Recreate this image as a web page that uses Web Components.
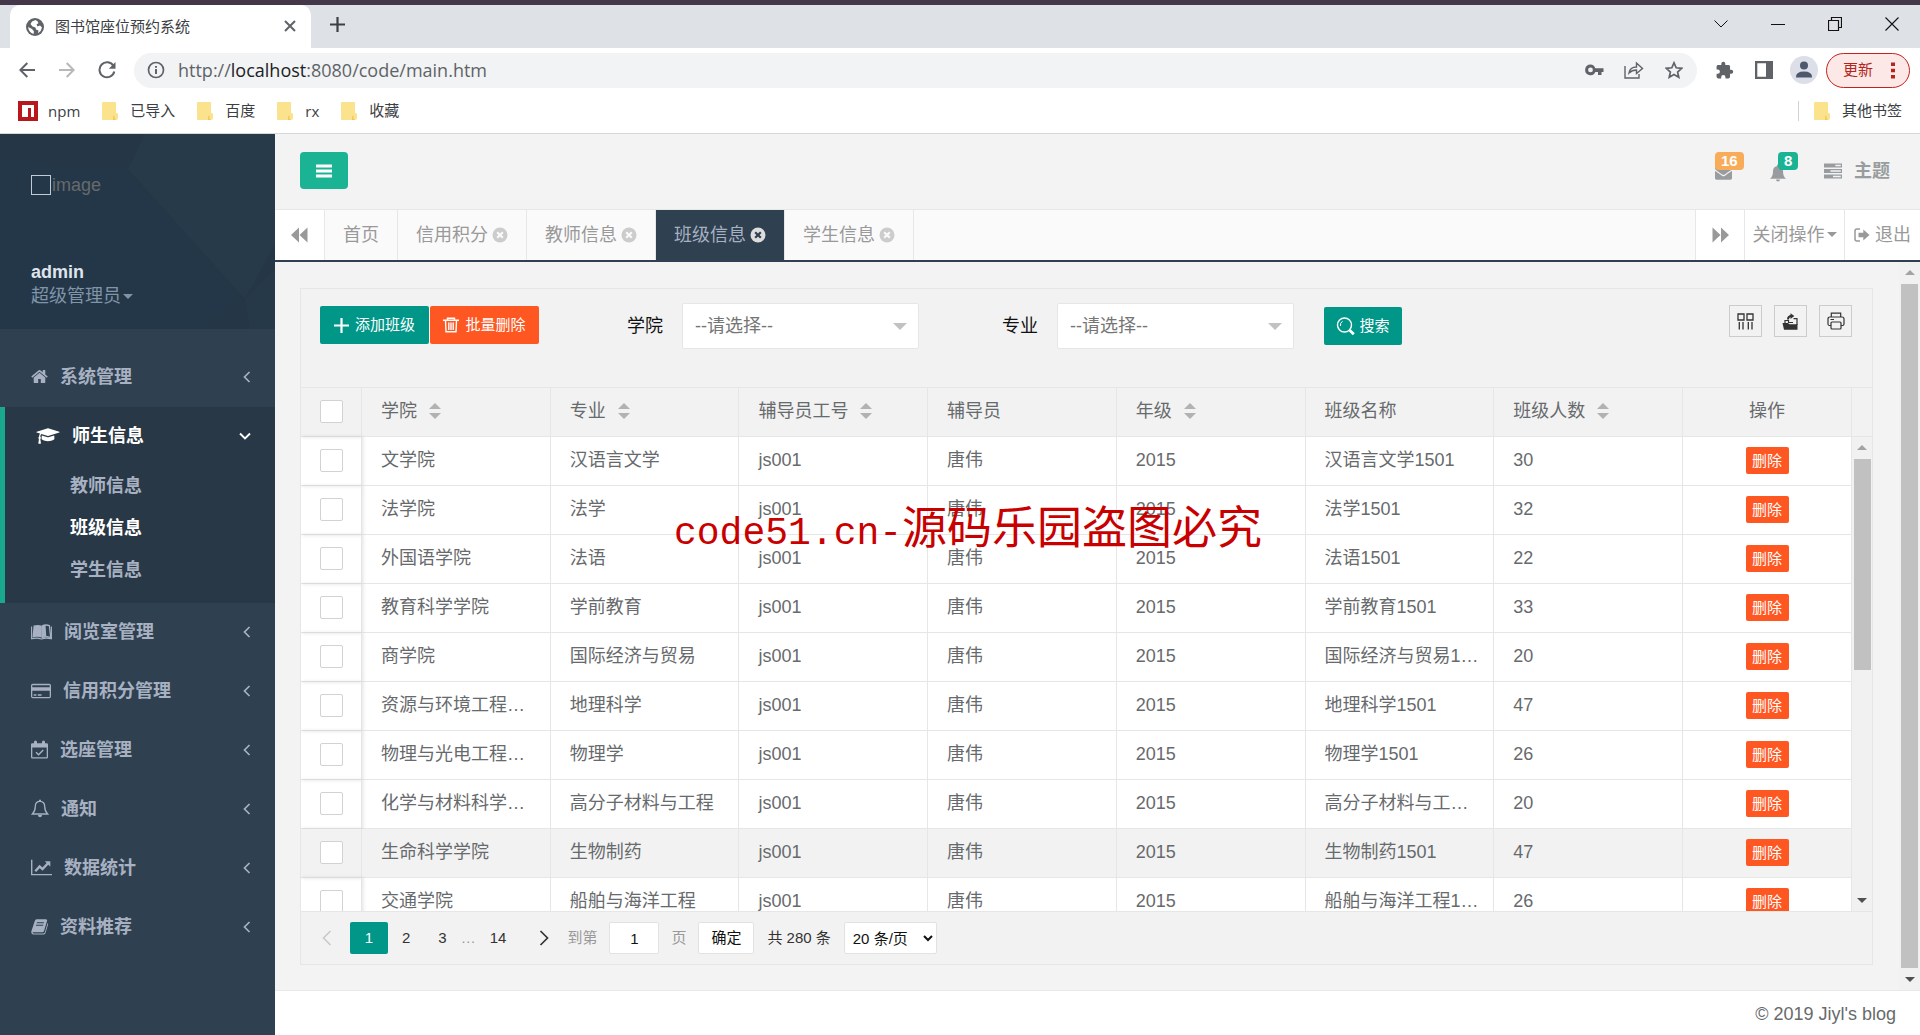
<!DOCTYPE html>
<html lang="zh-CN">
<head>
<meta charset="utf-8">
<title>图书馆座位预约系统</title>
<style>
  html, body { margin: 0; height: 100%; }
  body {
    font-family: "Liberation Sans", "Noto Sans CJK SC", sans-serif;
    font-size: 18px; line-height: 24px; color: #676a6c; background: #fff; overflow: hidden;
  }
</style>
</head>
<body>
<app-window></app-window>
<script>
const BASE = `
  *, *::before, *::after { box-sizing: border-box; }
  button, input, select { font: inherit; margin: 0; }
  button { border: 0; background: none; padding: 0; color: inherit; cursor: pointer; }
  a { color: inherit; text-decoration: none; }
  ul { list-style: none; margin: 0; padding: 0; }
`;
function define(name, css, html, setup) {
  customElements.define(name, class extends HTMLElement {
    constructor() {
      super();
      this.attachShadow({ mode: 'open' });
    }
    connectedCallback() {
      const t = document.createElement('template');
      t.innerHTML = `<style>${BASE}${css}</style>` + (typeof html === 'function' ? html(this) : html);
      this.shadowRoot.replaceChildren(t.content.cloneNode(true));
      if (setup) setup(this);
    }
  });
}

/* name: [width, height, viewBox, body] */
const line = (d, w = 2) => `<path d="${d}" fill="none" stroke="currentColor" stroke-width="${w}"/>`;
const ICONS = {
  home: [17, 17, '50 50 1692 1692', '<path d="M1472 992v480q0 26-19 45t-45 19h-384v-384h-256v384h-384q-26 0-45-19t-19-45v-480q0-1 .5-3t.5-3l575-474 575 474q1 2 1 6zm223-69l-62 74q-8 9-21 11h-3q-13 0-21-7l-692-577-692 577q-12 8-24 7-13-2-21-11l-62-74q-8-10-7-23.5t11-21.5l719-599q32-26 76-26t76 26l244 204v-195q0-14 9-23t23-9h192q14 0 23 9t9 23v408l219 182q10 8 11 21.5t-7 23.5z"/>'],
  cap: [24, 18, '0 0 2304 1792', '<path d="M1774 836l18 316q4 69-82 128t-235 93.5-323 34.5-323-34.5-235-93.5-82-128l18-316 574 181q22 7 48 7t48-7zm530-324q0 23-22 31l-1120 352q-4 1-10 1t-10-1l-652-206q-43 34-71 111.5t-34 178.5q63 36 63 109 0 69-58 107l58 433q2 14-8 25-9 11-24 11h-192q-15 0-24-11-10-11-8-25l58-433q-58-38-58-107 0-73 65-111 11-207 98-330l-333-104q-22-8-22-31t22-31l1120-352q4-1 10-1t10 1l1120 352q22 8 22 31z"/>'],
  reader: [21, 16, '0 0 21 16', '<path d="M2.600 1.600Q7 .2 10.800 1.700V13.600Q6.500 12 1.400 13.500Z"/><path d="M10.900 2Q14.500.2 18.400 1.600L19.700 13.500Q15 12 10.900 13.600" fill="none" stroke="currentColor" stroke-width="1.300"/><path d="M10.700 2Q13 1 14.500 1.100L15.300 12.500Q13 12.500 10.700 13.500Z"/><path d="M.6 2.500V14.800Q6 13.300 10.500 15Q15 13.300 20.400 14.800V2.500" fill="none" stroke="currentColor" stroke-width="1.100"/>'],
  card: [20, 16, '0 0 20 16', '<path fill-rule="evenodd" d="M1.700.8H18.300Q20 .8 20 2.500V13.500Q20 15.200 18.300 15.200H1.700Q0 15.200 0 13.500V2.500Q0 .8 1.700.8ZM1.300 2.200V4.300H18.700V2.200ZM1.300 7.700V13.900H18.700V7.700ZM2.700 11.300H5.400V12.700H2.700ZM6.800 11.300H10.500V12.700H6.800Z"/>'],
  calendar: [17, 19, '0 0 17 19', '<path fill-rule="evenodd" d="M1.300 3.200H3V2Q3 .5 4.500 .5T6 2V3.200H11V2Q11 .5 12.500.5T14 2V3.200H15.700Q17 3.200 17 4.500V17.200Q17 18.500 15.700 18.500H1.300Q0 18.500 0 17.200V4.500Q0 3.200 1.300 3.200ZM1.300 7.400V17.200H15.700V7.400Z"/>' + line('M5 12.200L7.600 14.700L12.200 10', 1.500)],
  bellO: [18, 19, '0 0 18 19', line('M9 2.300C6 2.300 4.300 4.500 4.300 7.600C4.300 11.500 3 13.500 1.400 15H16.600C15 13.500 13.700 11.500 13.700 7.600C13.700 4.500 12 2.300 9 2.300Z', 1.300) + '<path d="M6.900 16H11.100Q10.800 18.300 9 18.300T6.900 16ZM8 .8H10V2.500H8Z"/>'],
  chart: [21, 17, '0 0 21 17', line('M.7.700V15.600H21', 1.400) + line('M4.300 12.300L8.600 7.400L11.500 10.100L17 4.200', 2.400) + '<path d="M13.800 2.200H19.300V7.700Z"/>'],
  book: [17, 17, '0 0 17 17', '<path fill-rule="evenodd" d="M5.500 1.200H15Q16.500 1.500 16 3L13 13Q12.700 14.200 11.200 14.200H1.800Q1.300 15.300 2.800 15.500H12.500Q13.500 15.300 13.900 14.300L16.600 5Q17.300 5.700 16.900 7L14.500 15Q14 16.600 12.500 16.600H2.500Q.2 16.300.2 13.700L3.800 3Q4.200 1.500 5.500 1.200ZM6 4.200L5.700 5.200H12.800L13.100 4.200ZM5.100 6.800L4.800 7.800H12L12.300 6.800Z"/>'],
  left: [8, 12, '0 0 8 12', line('M6.500 1L1.500 6L6.500 11', 1.700)],
  down: [12, 8, '0 0 12 8', line('M1 1.500L6 6.500L11 1.500', 1.900)],
  bars: [16, 14, '0 0 16 14', '<path d="M0 .5H16V3.500H0ZM0 5.500H16V8.500H0ZM0 10.500H16V13.500H0Z"/>'],
  envelope: [19, 17, '0 0 1792 1792', '<path d="M1792 710v794q0 66-47 113t-113 47h-1472q-66 0-113-47t-47-113v-794q44 49 101 87 362 246 497 345 57 42 92.500 65.500t94.500 48 110 24.500h2q51 0 110-24.500t94.500-48 92.500-65.500q170-123 498-345 57-39 100-87zm0-294q0 79-49 151t-122 123q-376 261-468 325-10 7-42.500 31t-54 38.500-52 32.500-57.500 27-50 9h-2q-23 0-50-9t-57.500-27-52-32.500-54-38.500-42.500-31q-91-64-262-182.500t-205-142.500q-62-42-117-115.500t-55-136.500q0-78 41.500-130t118.500-52h1472q65 0 112.500 47t47.500 113z"/>'],
  bell: [18, 18, '0 0 18 18', '<path d="M8 .8Q9 0 10 .8V2Q14 3 14 7C14 11 15 13 17 14.800H1C3 13 4 11 4 7Q4 3 8 2ZM7 15.500H11Q11 17.500 9 17.500T7 15.500Z"/>'],
  tasks: [18, 16, '0 0 18 16', '<path fill-rule="evenodd" d="M0 .5H18V4.500H0ZM11.300 1.700V3.200H16.800V1.700ZM0 6H18V10H0ZM6.500 7.200V8.700H16.800V7.200ZM0 11.500H18V15.500H0ZM9 12.700V14.200H16.800V12.700Z"/>'],
  backward: [17, 16, '0 0 17 16', '<path d="M0 8L8 .5V15.500ZM8.500 8L16.500.5V15.500Z"/>'],
  forward: [17, 16, '0 0 17 16', '<path d="M17 8L9 .5V15.500ZM8.500 8L.5.5V15.500Z"/>'],
  caret: [10, 5, '0 0 10 5', '<path d="M0 0H10L5 5Z"/>'],
  exit: [16, 14, '0 0 16 14', line('M6 1H3Q1 1 1 3V11Q1 13 3 13H6', 1.500) + '<path d="M4.500 4.700H9.300V1.500L15.500 7L9.300 12.500V9.300H4.500Z"/>'],
  remove: [16, 16, '0 0 16 16', '<circle cx="8" cy="8" r="7.500"/><path d="M5.200 5.200L10.800 10.800M10.800 5.200L5.200 10.800" stroke="var(--hole,#fafafa)" stroke-width="2.200"/>'],
  plus: [15, 15, '0 0 15 15', line('M7.500 0V15M0 7.500H15', 2.200)],
  trash: [16, 16, '0 0 16 16', line('M0 3.200H16M4.500 3V1.300H11.500V3M2.500 3.500L3 14.800H13L13.500 3.500M5.800 5.500V13M8 5.500V13M10.200 5.500V13', 1.400)],
  search: [19, 19, '0 0 19 19', '<circle cx="8.500" cy="8" r="7" fill="none" stroke="currentColor" stroke-width="1.400"/>' + line('M4.500 9A4.500 4.500 0 0 1 6.500 4.300', 1) + line('M13.700 13.200L17.800 17.200', 2.800)],
  columns: [17, 17, '0 0 17 17', line('M1 1H7V7H1ZM10 1H16V7H10ZM2.300 9V16.500M6 9V16.500M11.300 9V16.500M15 9V16.500', 1.300)],
  export: [17, 17, '0 0 17 17', '<path d="M.5 10H6L7.500 11.200H15.500V16.800H2Z"/>' + line('M3 10V7.500H6.500V9.500H11M11.500 5.700H15V12', 1.200) + line('M6 6.500Q6 3 9.500 3', 2) + '<path d="M8.500.3L12.300 3L8.500 6Z"/>'],
  print: [18, 18, '0 0 18 18', line('M4.300 5V1.200H13.700V5M4 13.500H2.500Q1 13.500 1 12V7Q1 5 3 5H15Q17 5 17 7V12Q17 13.500 15.500 13.500H14M3.500 7.500H7', 1.200) + '<rect x="4" y="10" width="10" height="7" rx="1" fill="none" stroke="currentColor" stroke-width="1.200"/>'],
  prev: [10, 16, '0 0 10 16', line('M8.500 1L1.500 8L8.500 15', 1.500)],
  next: [10, 16, '0 0 10 16', line('M1.500 1L8.500 8L1.500 15', 1.700)],
  /* browser frame */
  globe: [18, 18, '0 0 18 18', '<circle cx="9" cy="9" r="9"/><path fill="#fff" d="M9.500 2Q12 3 12.500 5L10.500 6.500L11.500 8.500L14 7.500L16 9.500Q15.500 13 12 15.300L12.500 12.500L10 11.500L9.500 9.500L6.500 8.500L4.500 6L6 3.500ZM2 9L6 11L8 13.500L7.500 16Q3 14.500 2 9Z"/>'],
  close: [12, 12, '0 0 12 12', line('M1 1L11 11M11 1L1 11', 2)],
  add: [15, 15, '0 0 15 15', line('M7.500 0V15M0 7.500H15', 2.200)],
  wdown: [14, 8, '0 0 14 8', line('M.5.5L7 7L13.500.5', 1)],
  wmin: [14, 14, '0 0 14 14', line('M0 7.500H14', 1)],
  wmax: [14, 14, '0 0 14 14', line('M.5 3.500H10.500V13.500H.5ZM3.500 3.500V.5H13.500V10.500H10.500', 1.200)],
  wclose: [14, 14, '0 0 14 14', line('M.5.5L13.500 13.500M13.500.5L.5 13.500', 1.100)],
  back: [16, 16, '0 0 16 16', line('M16 8H1.500M8.300 1L1.300 8L8.300 15', 2)],
  fwd: [16, 16, '0 0 16 16', line('M0 8H14.500M7.700 1L14.700 8L7.700 15', 2)],
  reload: [18, 18, '0 0 18 18', line('M15.500 5A7.500 7.500 0 1 0 16.300 10.500', 2) + '<path d="M17.500 1V7.800H10.800Z"/>'],
  info: [18, 18, '0 0 18 18', '<circle cx="9" cy="9" r="7.500" fill="none" stroke="currentColor" stroke-width="1.700"/><path d="M8 8H10V13H8ZM8 5H10V6.800H8Z"/>'],
  key: [19, 12, '0 0 19 12', '<path fill-rule="evenodd" d="M5.500.5A5.300 5.300 0 1 0 10.300 8H13V11H16.500V8H18.500V4.200H10.300A5.300 5.300 0 0 0 5.500.5ZM5.500 3.500A2.400 2.400 0 1 1 5.500 8.300A2.400 2.400 0 0 1 5.500 3.500Z"/>'],
  share: [20, 18, '0 0 20 18', line('M1 5V17H15V13M5 12Q6 6 12.500 6V2L18.500 7.500L12.500 12.500V9Q8 9 5 12Z', 1.400)],
  star: [18, 18, '0 0 18 18', line('M9 1.800L11.200 6.800L16.700 7.300L12.600 11L13.800 16.300L9 13.500L4.200 16.300L5.400 11L1.300 7.300L6.800 6.800Z', 1.700)],
  puzzle: [19, 19, '0 0 24 24', '<path d="M20.500 11H19V7c0-1.100-.9-2-2-2h-4V3.500a2.500 2.500 0 0 0-5 0V5H4c-1.100 0-2 .9-2 2v3.800h1.500a2.700 2.700 0 0 1 0 5.400H2V20c0 1.100.9 2 2 2h3.800v-1.500a2.700 2.700 0 0 1 5.400 0V22H17c1.100 0 2-.9 2-2v-4h1.500a2.500 2.500 0 0 0 0-5z"/>'],
  side: [18, 18, '0 0 18 18', '<path fill-rule="evenodd" d="M0 0H18V18H0ZM2.300 2.300V15.700H11V2.300Z"/>'],
  person: [28, 28, '0 0 28 28', '<circle cx="14" cy="14" r="14" fill="#dcdfe8"/><circle cx="14" cy="9.500" r="4" fill="#4d586d"/><path fill="#4d586d" d="M6 21Q6 15.500 14 15.500T22 21V21.500H6Z"/>'],
  dots: [4, 17, '0 0 4 17', '<path d="M0 .5H4V4H0ZM0 6.700H4V10.200H0ZM0 13H4V16.500H0Z"/>'],
  npm: [20, 20, '0 0 20 20', '<path fill="#b8171b" fill-rule="evenodd" d="M0 0H20V20H0ZM4 4V16H10V7H13V16H16V4Z"/>'],
  folder: [16, 18, '0 0 16 18', '<path fill="#fbe28c" d="M1 0H13Q14 0 14 1V11H15Q16 11 16 12.500V16Q16 18 14 18H1Q0 18 0 17V1Q0 0 1 0Z"/><path fill="#eec95e" d="M11 18V15Q11 13.500 12.500 13.500V16.500L14 18Z"/>']
};
define('x-icon', `:host{display:inline-flex;flex:none} svg{display:block;fill:currentColor}`, el => {
  const [w, h, vb, body] = ICONS[el.getAttribute('name')];
  return `<svg width="${w}" height="${h}" viewBox="${vb}" aria-hidden="true">${body}</svg>`;
});

/* ---------- browser frame ---------- */
define('browser-tabs', `
  :host{display:flex;height:48px;background:#dee1e6;border-top:5px solid #45374a;color:#3c4043;font-size:15px}
  .tab{display:flex;align-items:center;width:301px;margin-left:10px;padding:0 15px 0 16px;background:#fff;border-radius:10px 10px 0 0}
  .tab x-icon{color:#5f6368}
  .tab span{flex:1;padding-left:11px}
  .new{padding:0 19px}
  .win{margin-left:auto;display:flex}
  .win button{width:57px;display:flex;align-items:center;justify-content:center;color:#111;height:38px}
`, `<div class="tab"><x-icon name="globe"></x-icon><span>图书馆座位预约系统</span><button aria-label="关闭标签页"><x-icon name="close"></x-icon></button></div>
<button class="new" aria-label="新标签页"><x-icon name="add"></x-icon></button>
<div class="win">${['wdown','wmin','wmax','wclose'].map(n => `<button aria-label="${n}"><x-icon name="${n}"></x-icon></button>`).join('')}</div>`);

define('browser-toolbar', `
  :host{display:flex;align-items:center;height:44px;padding:0 10px 0 7px;color:#5f6368;background:#fff}
  .nav{width:40px;display:flex;justify-content:center}
  .nav.off{opacity:.45}
  .pill{flex:1;display:flex;align-items:center;height:35px;margin:0 7px;padding:0 13px;border-radius:18px;background:#f1f3f4}
  .url{flex:1;padding-left:13px;font:18px/24px "Open Sans","Noto Sans",sans-serif;color:#5f6368}
  .url b{font-weight:400;color:#202124}
  .pill button{width:40px;display:flex;justify-content:center}
  .pill button:last-child{width:20px;margin-left:10px}
  .ext{width:40px;display:flex;justify-content:center}
  .update{display:flex;align-items:center;justify-content:space-between;width:84px;height:35px;margin-left:2px;padding:0 14px 0 16px;
    border:1px solid #c5221f;border-radius:18px;background:#fce8e6;color:#b3261e;font-size:15px}
`, `<button class="nav" aria-label="后退"><x-icon name="back"></x-icon></button>
<button class="nav off" aria-label="前进"><x-icon name="fwd"></x-icon></button>
<button class="nav" aria-label="刷新"><x-icon name="reload"></x-icon></button>
<div class="pill"><x-icon name="info"></x-icon><span class="url">http://<b>localhost</b>:8080/code/main.htm</span>
<button aria-label="密码"><x-icon name="key"></x-icon></button><button aria-label="分享"><x-icon name="share"></x-icon></button><button aria-label="收藏"><x-icon name="star"></x-icon></button></div>
<button class="ext" aria-label="扩展"><x-icon name="puzzle"></x-icon></button>
<button class="ext" aria-label="侧边栏"><x-icon name="side"></x-icon></button>
<button class="ext" aria-label="用户"><x-icon name="person"></x-icon></button>
<button class="update">更新<x-icon name="dots"></x-icon></button>`);

define('browser-bookmarks', `
  :host{display:flex;align-items:center;height:42px;padding:0 18px 3px;background:#fff;border-bottom:1px solid #d5d7da;color:#3c4043;font-size:15px}
  a{display:flex;align-items:center;gap:12px;margin-right:22px}
  a.npm{gap:10px}
  a.npm,a.lat{font-family:"Open Sans",sans-serif}
  a.other{margin:0 0 0 auto;border-left:1px solid #cfd1d4;padding-left:15px;height:20px}
`, `<a class="npm" href="#"><x-icon name="npm"></x-icon>npm</a>
<a href="#"><x-icon name="folder"></x-icon>已导入</a><a href="#"><x-icon name="folder"></x-icon>百度</a>
<a class="lat" href="#"><x-icon name="folder"></x-icon>rx</a><a href="#"><x-icon name="folder"></x-icon>收藏</a>
<a class="other" href="#"><x-icon name="folder"></x-icon>其他书签</a>`);

/* ---------- sidebar ---------- */
define('nav-group', `
  :host{display:block;color:#a7b1c2;font-weight:700}
  :host([open]){background:#293846;border-left:5px solid #19aa8d;padding-bottom:11px}
  a{display:flex;align-items:center;color:inherit}
  .top{height:59px;padding:0 24px 2px 31px;gap:12px}
  .top .arrow{margin-left:auto}
  :host([open]) .top{color:#fff}
  li a{height:42px;padding:0 0 2px 65px}
  li a.on{color:#fff}
`, el => {
  const subs = (el.getAttribute('items') || '').split(',').filter(Boolean);
  const open = el.hasAttribute('open');
  return `<a class="top" href="#"><x-icon name="${el.getAttribute('icon')}"></x-icon><slot></slot><x-icon class="arrow" name="${open ? 'down' : 'left'}"></x-icon></a>` +
    (subs.length ? `<ul>${subs.map(s => `<li><a href="#" class="${s === el.getAttribute('current') ? 'on' : ''}">${s}</a></li>`).join('')}</ul>` : '');
});

define('side-bar', `
  :host{display:block;width:275px;flex:none;background:#2f4050}
  .profile{display:grid;height:195px;margin-bottom:19px;background:#253747;overflow:hidden}
  .profile > *{grid-area:1/1}
  .art{width:100%;height:100%}
  .who{display:flex;flex-direction:column;padding:40px 31px 21px;z-index:1}
  .img{display:flex;align-items:center;gap:1px;line-height:22px;color:#676a6c}
  .img i{width:20px;height:20px;border:1px solid #c3ccd5}
  strong{margin-top:auto;color:#dfe4ed}
  .role{display:flex;align-items:center;gap:2px;color:#8095a8}
`, `<div class="profile">
<svg class="art" viewBox="0 0 275 195" preserveAspectRatio="none" aria-hidden="true"><path fill="#273a49" d="M145 0H275V110L245 165L128 35Z"/><path fill="#243748" d="M0 26L125 36L240 165L200 195H0Z"/><path fill="#263949" d="M275 135L245 165L250 195H275Z"/></svg>
<div class="who"><div class="img"><i></i>image</div><strong>admin</strong><a class="role" href="#">超级管理员<x-icon name="caret"></x-icon></a></div></div>
<nav>
<nav-group icon="home">系统管理</nav-group>
<nav-group icon="cap" open items="教师信息,班级信息,学生信息" current="班级信息">师生信息</nav-group>
<nav-group icon="reader">阅览室管理</nav-group>
<nav-group icon="card">信用积分管理</nav-group>
<nav-group icon="calendar">选座管理</nav-group>
<nav-group icon="bellO">通知</nav-group>
<nav-group icon="chart">数据统计</nav-group>
<nav-group icon="book">资料推荐</nav-group>
</nav>`);

/* ---------- page header and tabs ---------- */
define('top-bar', `
  :host{display:flex;align-items:flex-start;height:75px;padding:18px 30px 0 25px;background:#f3f3f4;color:#999c9e}
  .menu{width:48px;height:37px;border-radius:4px;background:#1ab394;color:#fff;display:flex;align-items:center;justify-content:center}
  .right{margin-left:auto;display:flex;align-items:center;height:37px}
  .note{position:relative;display:flex;margin-top:4px}
  .note b{position:absolute;left:var(--x);top:-12px;height:18px;padding:0 6px;border-radius:4px;background:var(--c);color:#fff;font-size:15px;line-height:18px}
  .mail{--x:1px;--c:#f8ac59;margin-right:36px}
  .bell{--x:9px;--c:#1ab394;margin-right:37px}
  .theme{display:flex;align-items:center;gap:12px;font-weight:700}
`, `<button class="menu" aria-label="菜单"><x-icon name="bars"></x-icon></button>
<div class="right"><a class="note mail" href="#"><x-icon name="envelope"></x-icon><b>16</b></a>
<a class="note bell" href="#"><x-icon name="bell"></x-icon><b>8</b></a>
<a class="theme" href="#"><x-icon name="tasks"></x-icon>主题</a></div>`);

define('page-tabs', `
  :host{display:flex;height:53px;background:#fafafa;border-top:1px solid #e7e7e7;border-bottom:2px solid #2f4050;color:#999}
  a,button{display:flex;align-items:center;border-right:1px solid #e7e7e7;padding-bottom:1px}
  a{gap:4px;padding:0 18px 1px}
  a x-icon{color:#ccc}
  a.on{background:#2f4050;color:#a7b1c2}
  a.on x-icon{color:#ddd;--hole:#2f4050}
  button{background:#fff;justify-content:center}
  .roll{width:50px}
  .next{margin-left:auto;border-left:1px solid #e7e7e7}
  .ops{width:100px;gap:2px}
  .out{width:75px;gap:5px;border-right:0}
`, `<button class="roll" aria-label="向左"><x-icon name="backward"></x-icon></button>
<a href="#">首页</a>
${['信用积分','教师信息','班级信息','学生信息'].map(t => `<a href="#" class="${t === '班级信息' ? 'on' : ''}">${t}<x-icon name="remove"></x-icon></a>`).join('')}
<button class="roll next" aria-label="向右"><x-icon name="forward"></x-icon></button>
<button class="ops">关闭操作<x-icon name="caret"></x-icon></button>
<button class="out"><x-icon name="exit"></x-icon>退出</button>`);

define('scroll-rail', `
  :host{display:flex;flex-direction:column;align-items:center;background:#f1f1f1;color:#505050;min-height:0}
  x-icon{height:22px;align-items:center}
  .up{transform:rotate(180deg);color:#a3a3a3}
  .track{flex:1;width:17px}
  .thumb{width:17px;height:var(--thumb,100%);background:#c1c1c1}
`, `<x-icon class="up" name="caret"></x-icon><div class="track"><div class="thumb"></div></div><x-icon name="caret"></x-icon>`);

/* ---------- content ---------- */
define('pick-list', `
  :host{display:flex;align-items:center;gap:19px;color:#111}
  label{padding-bottom:1px}
  .box{display:grid;align-items:center;width:237px}
  .box > *{grid-area:1/1}
  select{appearance:none;width:100%;height:46px;padding:0 12px;border:1px solid #e6e6e6;border-radius:2px;background:#fff;color:#757575}
  .box span{justify-self:end;margin-right:12px;border:7px solid transparent;border-top-color:#c2c2c2;border-bottom:0;pointer-events:none}
`, el => `<label for="s">${el.getAttribute('label')}</label><div class="box"><select id="s"><option>--请选择--</option></select><span></span></div>`);

define('table-tools', `
  :host{display:flex;align-items:flex-start;height:98px;padding:14px 20px 0 19px}
  .btn{display:flex;align-items:center;justify-content:center;gap:6px;height:38px;margin-top:3px;border-radius:2px;color:#fff;font-size:15px;background:#009688}
  .add{width:109px}
  .del{width:109px;margin-left:1px;background:#ff5722}
  pick-list{margin-left:88px}
  pick-list + pick-list{margin-left:83px}
  .find{width:78px;margin-left:30px;margin-top:4px;gap:4px}
  .tools{display:flex;gap:12px;margin:2px 0 0 auto}
  .tools button{width:33px;height:32px;border:1px solid #ccc;color:#333;display:flex;align-items:center;justify-content:center}
`, `<button class="btn add"><x-icon name="plus"></x-icon>添加班级</button><button class="btn del"><x-icon name="trash"></x-icon>批量删除</button>
<pick-list label="学院"></pick-list><pick-list label="专业"></pick-list>
<button class="btn find"><x-icon name="search"></x-icon>搜索</button>
<div class="tools"><button aria-label="筛选列"><x-icon name="columns"></x-icon></button><button aria-label="导出"><x-icon name="export"></x-icon></button><button aria-label="打印"><x-icon name="print"></x-icon></button></div>`);

const ROWS = [
  ['文学院','汉语言文学','汉语言文学1501',30], ['法学院','法学','法学1501',32],
  ['外国语学院','法语','法语1501',22], ['教育科学学院','学前教育','学前教育1501',33],
  ['商学院','国际经济与贸易','国际经济与贸易1…',20], ['资源与环境工程…','地理科学','地理科学1501',47],
  ['物理与光电工程…','物理学','物理学1501',26], ['化学与材料科学…','高分子材料与工程','高分子材料与工…',20],
  ['生命科学学院','生物制药','生物制药1501',47], ['交通学院','船舶与海洋工程','船舶与海洋工程1…',26]
];
const sortable = t => `<th><span>${t}<i class="sort"></i></span></th>`;
define('class-table', `
  :host{display:grid;grid-template-columns:1fr 20px;grid-template-rows:49px 1fr;min-height:0;border:solid #e6e6e6;border-width:1px 0}
  .view{grid-row:1/3;min-height:0;overflow:hidden;contain:size}
  table{width:100%;table-layout:fixed;border-collapse:separate;border-spacing:0;background:#fff}
  th,td{height:49px;padding:0 0 3px 19px;border:solid #e6e6e6;border-width:0 1px 1px 0;text-align:left;font-weight:400;white-space:nowrap;line-height:24px}
  th{background:#f2f2f2}
  tr.hover td{background:#f2f2f2}
  .ck{width:61px;padding:0 0 2px;text-align:center;box-shadow:1px 0 4px rgba(0,0,0,.12)}
  .act{width:169px;padding:0 0 2px;text-align:center}
  input{appearance:none;display:block;width:23px;height:23px;margin:0 auto;border:1px solid #d2d2d2;border-radius:2px;background:#fff}
  th span{display:inline-flex;align-items:center;gap:12px}
  .sort{display:grid;gap:4px}
  .sort::before,.sort::after{content:"";border:6px solid transparent}
  .sort::before{border-top:0;border-bottom-color:#b2b2b2}
  .sort::after{border-bottom:0;border-top-color:#b2b2b2}
  td button{display:inline-block;vertical-align:middle;width:43px;height:27px;border-radius:2px;background:#ff5722;color:#fff;font-size:15px;line-height:27px}
  .corner{border-bottom:1px solid #e6e6e6}
  scroll-rail{--thumb:49%}
`, `<div class="view"><table><thead><tr><th class="ck"><input type="checkbox" aria-label="全选"></th>${sortable('学院')}${sortable('专业')}${sortable('辅导员工号')}<th>辅导员</th>${sortable('年级')}<th>班级名称</th>${sortable('班级人数')}<th class="act">操作</th></tr></thead>
<tbody>${ROWS.map((r, i) => `<tr class="${i === 8 ? 'hover' : ''}"><td class="ck"><input type="checkbox" aria-label="选择"></td><td>${r[0]}</td><td>${r[1]}</td><td>js001</td><td>唐伟</td><td>2015</td><td>${r[2]}</td><td>${r[3]}</td><td class="act"><button>删除</button></td></tr>`).join('')}</tbody></table></div>
<div class="corner"></div><scroll-rail></scroll-rail>`);

define('page-nav', `
  :host{display:flex;align-items:center;height:52px;padding-left:2px;font-size:15px;color:#333}
  button,a{display:flex;align-items:center;justify-content:center;height:32px;padding:0 14px;border-radius:2px}
  .prev,.next{width:47px}
  .prev{color:#c8c8c8}
  .on{width:38px;background:#009688;color:#fff}
  .dim{color:#999}
  label{display:flex;align-items:center;gap:12px;color:#999}
  input{width:50px;height:32px;border:1px solid #e2e2e2;border-radius:2px;text-align:center;color:#111;background:#fff;padding:0}
  .ok{width:56px;margin:0 13px 0 12px;padding:0;border:1px solid #e2e2e2;background:#fff;color:#111}
  select{width:93px;height:32px;margin-left:13px;padding:0 4px;border:1px solid #e2e2e2;border-radius:2px;background:#fff;color:#111}
`, `<button class="prev" aria-label="上一页"><x-icon name="prev"></x-icon></button><a class="on" href="#">1</a><a href="#">2</a><a href="#">3</a><span class="dim">…</span><a href="#">14</a>
<button class="next" aria-label="下一页"><x-icon name="next"></x-icon></button>
<label>到第<input type="text" value="1">页</label><button class="ok">确定</button><span>共 280 条</span>
<select aria-label="每页条数"><option>20 条/页</option></select>`);

define('content-area', `
  :host{display:flex;flex:1;min-height:0;background:#f3f3f4;border-bottom:1px solid #e7eaec}
  .page{flex:1;display:flex;padding:26px 26px 25px 25px}
  .panel{flex:1;display:flex;flex-direction:column;border:1px solid #e6e6e6;background:#f2f2f2}
  class-table{flex:1}
  scroll-rail{width:21px}
`, `<div class="page"><div class="panel"><table-tools></table-tools><class-table></class-table><page-nav></page-nav></div></div><scroll-rail></scroll-rail>`);

define('water-mark', `
  :host{position:absolute;left:674px;top:497px;display:flex;align-items:baseline;line-height:64px;color:#c80000;white-space:nowrap;pointer-events:none;font-size:45px}
  span{font-family:"Liberation Mono",monospace;font-size:38px}
`, `<span>code51.cn-</span>源码乐园盗图必究`);

define('app-window', `
  :host{display:flex;flex-direction:column;height:100vh}
  .app{flex:1;display:flex;min-height:0}
  main{flex:1;display:flex;flex-direction:column;min-width:0}
  footer{height:44px;line-height:46px;padding-right:24px;text-align:right;background:#fff}
`, `<browser-tabs></browser-tabs><browser-toolbar></browser-toolbar><browser-bookmarks></browser-bookmarks>
<div class="app"><side-bar></side-bar><main><top-bar></top-bar><page-tabs></page-tabs><content-area></content-area><footer>© 2019 Jiyl's blog</footer></main></div>
<water-mark></water-mark>`);
</script>
</body>
</html>
